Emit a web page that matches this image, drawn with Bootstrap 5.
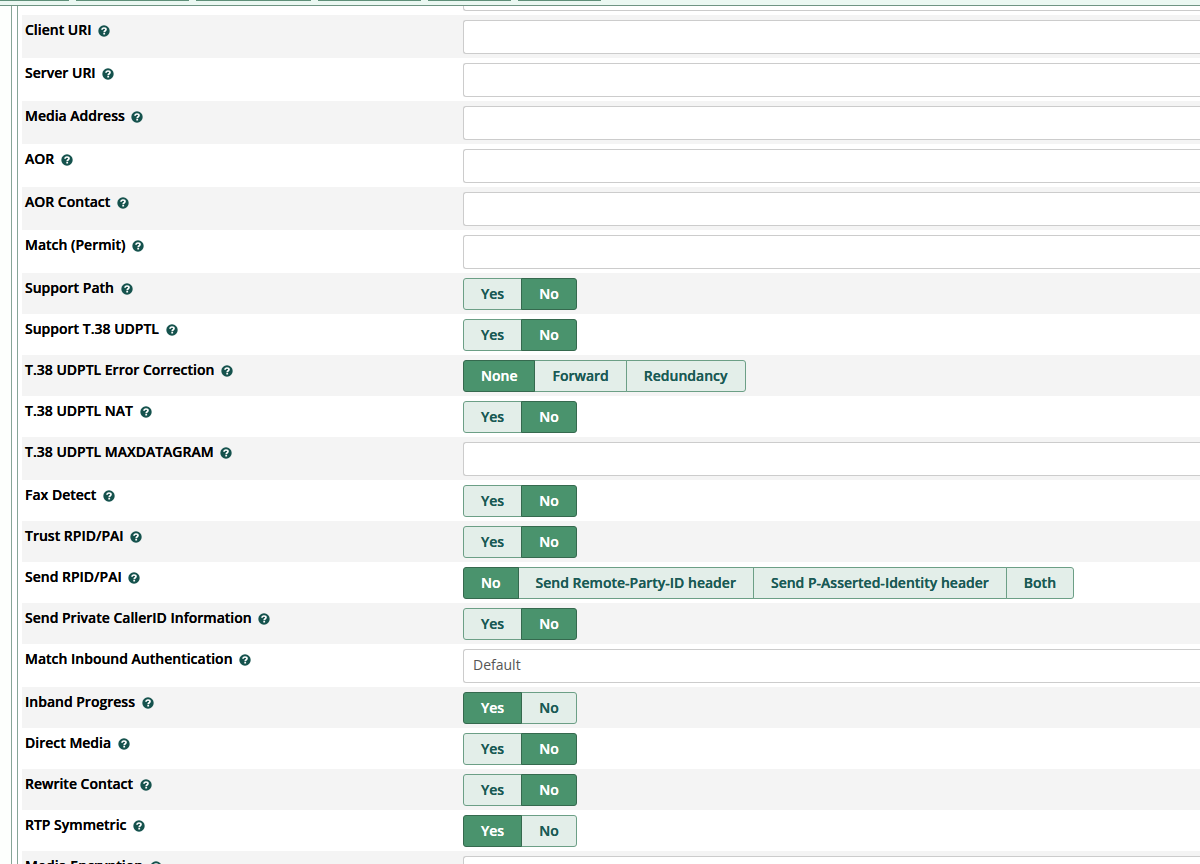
<!DOCTYPE html>
<html lang="en">
<head>
<meta charset="utf-8">
<meta name="viewport" content="width=device-width, initial-scale=1">
<title>PJSIP Settings</title>
<link rel="stylesheet" href="https://cdn.jsdelivr.net/npm/bootstrap@5.3.0/dist/css/bootstrap.min.css">
<style>
  body { font-family: "Open Sans", sans-serif; font-size: 14px; line-height: 20px; color: #000; background: #fdfffd; }
  .tab-strip { height: 6px; gap: 7px; background: #ebf8f2; border-bottom: 1px solid #6f9483; }
  .tab-strip a { height: 1px; background: #5f9079; }
  .outer-pane { margin-left: 11px; padding-left: 5px; border-left: 1px solid #87a597; background: #fff; }
  .inner-pane { padding-left: 4px; border-left: 1px solid #87a597; }
  .setting { padding: 5px 0 4px; }
  .setting.shaded { background: #f4f4f4; }
  .setting-name { flex: 0 0 441px; padding-left: 3px; font-weight: 600; }
  .setting-name, .choice .btn { text-shadow: 0 0 0 currentColor; }
  .setting-name svg { width: 12px; height: 12px; margin-left: 3px; vertical-align: -2px; }
  .field { height: 34px; padding: 5px 9px 7px; font-size: 14px; line-height: 20px; color: #555; border-color: #ccc; border-radius: 3px 0 0 3px; border-right: 0; }
  .clipped { height: 9px; }
  .choice .btn { --bs-btn-padding-x: 17px; --bs-btn-padding-y: 5px; --bs-btn-font-size: 14px; --bs-btn-font-weight: 600; --bs-btn-line-height: 20px; --bs-btn-border-radius: 3px;
    --bs-btn-color: #1a5a55; --bs-btn-bg: #e3eee9; --bs-btn-border-color: #6c9f86;
    --bs-btn-active-color: #fff; --bs-btn-active-bg: #4a936d; --bs-btn-active-border-color: #35694e; }
</style>
</head>
<body class="vh-100 overflow-hidden d-flex flex-column">
<svg class="d-none" aria-hidden="true">
  <symbol id="help" viewBox="0 0 12 12">
    <circle cx="6" cy="6" r="5.700" fill="#15524d"/>
    <path d="M4 4.800C4.100 3.500 5 3 6 3c1.200 0 2 .6 2 1.500C8 5.800 6.200 5.600 6.200 7.200" fill="none" stroke="#fff" stroke-width="1.700"/>
    <path d="M5.300 7.900h1.800v1.600H5.300z" fill="#fff"/>
  </symbol>
</svg>
<nav class="tab-strip d-flex flex-shrink-0" aria-label="Sections">
  <a href="#t1" style="width:69px" aria-label="Section 1"></a>
  <a href="#t2" style="width:113px" aria-label="Section 2"></a>
  <a href="#t3" style="width:115px" aria-label="Section 3"></a>
  <a href="#t4" style="width:103px" aria-label="Section 4"></a>
  <a href="#t5" style="width:83px" aria-label="Section 5"></a>
  <a href="#t6" style="width:83px" aria-label="Section 6"></a>
</nav>
<main class="outer-pane flex-grow-1 overflow-hidden">
  <form class="inner-pane" id="settings">
    <div class="clipped d-flex flex-column justify-content-end overflow-hidden">
      <div class="setting d-flex"><div class="setting-name"></div><input class="form-control field" type="text" aria-label="Previous setting"></div>
    </div>
  </form>
</main>
<script src="https://cdn.jsdelivr.net/npm/bootstrap@5.3.0/dist/js/bootstrap.bundle.min.js"></script>
<script>
  // Each entry: label, then the choices (none for a text field) and the selected one.
  const yesNo = ["Yes", "No"];
  const settings = [
    ["Client URI"], ["Server URI"], ["Media Address"], ["AOR"], ["AOR Contact"], ["Match (Permit)"],
    ["Support Path", yesNo, 1],
    ["Support T.38 UDPTL", yesNo, 1],
    ["T.38 UDPTL Error Correction", ["None", "Forward", "Redundancy"], 0],
    ["T.38 UDPTL NAT", yesNo, 1],
    ["T.38 UDPTL MAXDATAGRAM"],
    ["Fax Detect", yesNo, 1],
    ["Trust RPID/PAI", yesNo, 1],
    ["Send RPID/PAI", ["No", "Send Remote-Party-ID header", "Send P-Asserted-Identity header", "Both"], 0],
    ["Send Private CallerID Information", yesNo, 1],
    ["Match Inbound Authentication", "select"],
    ["Inband Progress", yesNo, 0],
    ["Direct Media", yesNo, 1],
    ["Rewrite Contact", yesNo, 1],
    ["RTP Symmetric", yesNo, 0],
    ["Media Encryption"]
  ];
  const help = '<svg role="img" aria-label="Help"><use href="#help"/></svg>';
  document.getElementById("settings").insertAdjacentHTML("beforeend", settings.map(([name, kind, on], i) => {
    const id = "s" + i, shade = i % 2 ? "" : " shaded";
    if (Array.isArray(kind)) {
      const group = kind.map((text, k) =>
        `<input class="btn-check" type="radio" name="${id}" id="${id}-${k}"${k === on ? " checked" : ""}><label class="btn" for="${id}-${k}">${text}</label>`).join("");
      return `<div class="setting choice d-flex${shade}"><div class="setting-name" id="${id}">${name} ${help}</div><div class="btn-group" role="group" aria-labelledby="${id}">${group}</div></div>`;
    }
    const control = kind === "select"
      ? `<select class="form-control field" id="${id}"><option>Default</option></select>`
      : `<input class="form-control field" type="text" id="${id}">`;
    return `<div class="setting d-flex${shade}"><label class="setting-name" for="${id}">${name} ${help}</label>${control}</div>`;
  }).join(""));
</script>
</body>
</html>
